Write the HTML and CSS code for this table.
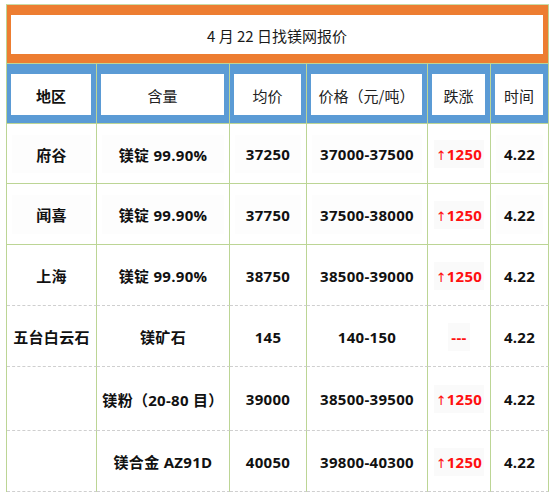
FILE: index.html
```html
<!DOCTYPE html>
<html lang="zh">
<head>
<meta charset="utf-8">
<link rel="stylesheet" href="styles.css">
</head>
<body>
<div class="sheet">
  <div class="grid">
    <div class="c title-cell"><div class="title">4 月 22 日找镁网报价</div></div>

    <div class="c head"><div class="hbox strong">地区</div></div>
    <div class="c head"><div class="hbox">含量</div></div>
    <div class="c head"><div class="hbox">均价</div></div>
    <div class="c head"><div class="hbox left">价格（元/吨）</div></div>
    <div class="c head"><div class="hbox">跌涨</div></div>
    <div class="c head"><div class="hbox">时间</div></div>

    <div class="c d solid"><div class="box">府谷</div></div>
    <div class="c d solid"><div class="box">镁锭 99.90%</div></div>
    <div class="c d solid"><div class="box">37250</div></div>
    <div class="c d solid"><div class="box">37000-37500</div></div>
    <div class="c d solid"><div class="plain"><span class="chg"><span class="arr">↑</span>1250</span></div></div>
    <div class="c d solid"><div class="box">4.22</div></div>

    <div class="c d solid"><div class="box">闻喜</div></div>
    <div class="c d solid"><div class="box">镁锭 99.90%</div></div>
    <div class="c d solid"><div class="box">37750</div></div>
    <div class="c d solid"><div class="box">37500-38000</div></div>
    <div class="c d solid"><div class="plain"><span class="chg"><span class="arr">↑</span>1250</span></div></div>
    <div class="c d solid"><div class="box">4.22</div></div>

    <div class="c d dash"><div class="plain">上海</div></div>
    <div class="c d dash"><div class="plain">镁锭 99.90%</div></div>
    <div class="c d dash"><div class="plain">38750</div></div>
    <div class="c d dash"><div class="plain">38500-39000</div></div>
    <div class="c d dash"><div class="plain"><span class="chg"><span class="arr">↑</span>1250</span></div></div>
    <div class="c d dash"><div class="plain">4.22</div></div>

    <div class="c d dash"><div class="plain">五台白云石</div></div>
    <div class="c d dash"><div class="plain">镁矿石</div></div>
    <div class="c d dash"><div class="plain">145</div></div>
    <div class="c d dash"><div class="plain">140-150</div></div>
    <div class="c d dash"><div class="plain"><span class="chg dashes">---</span></div></div>
    <div class="c d dash"><div class="plain">4.22</div></div>

    <div class="c d dash"><div class="plain"></div></div>
    <div class="c d dash"><div class="plain">镁粉（20-80 目）</div></div>
    <div class="c d dash"><div class="plain">39000</div></div>
    <div class="c d dash"><div class="plain">38500-39500</div></div>
    <div class="c d dash"><div class="plain"><span class="chg"><span class="arr">↑</span>1250</span></div></div>
    <div class="c d dash"><div class="plain">4.22</div></div>

    <div class="c d dash"><div class="plain"></div></div>
    <div class="c d dash"><div class="plain">镁合金 AZ91D</div></div>
    <div class="c d dash"><div class="plain">40050</div></div>
    <div class="c d dash"><div class="plain">39800-40300</div></div>
    <div class="c d dash"><div class="plain"><span class="chg"><span class="arr">↑</span>1250</span></div></div>
    <div class="c d dash"><div class="plain">4.22</div></div>
  </div>
</div>
</body>
</html>
```

FILE: styles.css
```css
* { box-sizing: border-box; }
html, body { margin: 0; padding: 0; background: #ffffff; }
body {
  font-family: "Open Sans", "Noto Sans CJK SC", sans-serif;
  color: #111111;
}
.sheet {
  padding: 4px 0 0 6px;
}
.grid {
  display: grid;
  width: 543px;
  grid-template-columns: 90px 133px 77px 121px 63px 58px;
  grid-template-rows: 59px 60px 60px 61px 61px 61px 64px 61px;
  border-left: 1px solid #bcd595;
  border-top: 1px solid #c9dca8;
}
.c {
  border-right: 1px solid #bcd595;
  border-bottom: 1px solid #bcd595;
  display: flex;
  min-width: 0;
}
.title-cell {
  grid-column: 1 / -1;
  background: #ed7d31;
  padding: 10px 5px 9px 4px;
}
.title {
  flex: 1;
  background: #ffffff;
  display: flex;
  align-items: center;
  justify-content: center;
  font-family: "Noto Sans CJK SC", sans-serif;
  font-size: 15px;
  color: #1a1a1a;
  padding-top: 1px;
}
.head {
  background: #5b9bd5;
  padding: 10px 5px 8px 4px;
}
.hbox {
  flex: 1;
  background: #ffffff;
  display: flex;
  align-items: center;
  justify-content: center;
  font-family: "Noto Sans CJK SC", sans-serif;
  font-size: 15px;
  color: #222222;
  padding-top: 2px;
  white-space: nowrap;
}
.hbox.strong { font-weight: 700; color: #111111; }
.d.dash { border-bottom: 1px dashed #cfcfcf; }
.d { padding: 11px 5px 10px 5px; }
.box, .plain {
  flex: 1;
  display: flex;
  align-items: center;
  justify-content: center;
  font-weight: 700;
  font-size: 15px;
  white-space: nowrap;
  letter-spacing: 0.3px;
}
.box { background: #fdfdfd; }
.chg {
  color: #ff1010;
  background: #fafafa;
  padding: 4px 2px;
}
.chg.dashes { padding: 4px 3px; }
.arr {
  font-family: "DejaVu Sans", sans-serif;
  font-weight: 400;
  font-size: 13px;
  letter-spacing: 0;
}
```
